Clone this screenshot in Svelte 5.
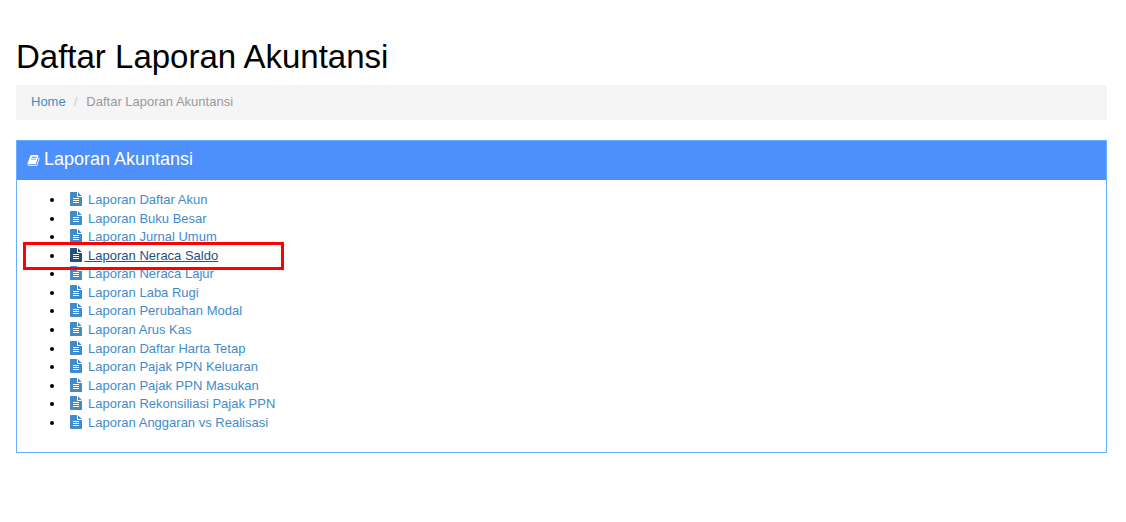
<script>
  const reports = [
    'Laporan Daftar Akun', 'Laporan Buku Besar', 'Laporan Jurnal Umum', 'Laporan Neraca Saldo',
    'Laporan Neraca Lajur', 'Laporan Laba Rugi', 'Laporan Perubahan Modal', 'Laporan Arus Kas',
    'Laporan Daftar Harta Tetap', 'Laporan Pajak PPN Keluaran', 'Laporan Pajak PPN Masukan',
    'Laporan Rekonsiliasi Pajak PPN', 'Laporan Anggaran vs Realisasi'
  ];
  const active = 'Laporan Neraca Saldo';
</script>

<div class="page">
  <h1>Daftar Laporan Akuntansi</h1>
  <ol class="breadcrumb">
    <li><a href="#home">Home</a></li>
    <li class="sep">/</li>
    <li class="current">Daftar Laporan Akuntansi</li>
  </ol>
  <section class="panel">
    <header>
      <svg class="book" viewBox="0 0 1792 1792" fill="currentColor"><path d="M1703 478q40 57 18 129l-275 906q-19 64-76.500 107.500t-122.500 43.500h-923q-77 0-148.500-53.500t-99.500-131.500q-24-67-2-127 0-4 3-27t4-37q1-8-3-21.500t-3-19.500q2-11 8-21t16.500-23.500 16.500-23.500q23-38 45-91.500t30-91.500q3-10 .5-30t-.5-28q3-11 17-28t17-23q21-36 42-92t25-90q1-9-2.500-32t.5-28q4-13 22-30.500t22-22.500q19-26 42.500-84.500t27.500-96.500q1-8-3-25.500t-2-26.500q2-8 9-18t18-23 17-21q8-12 16.500-30.500t15-35 16-36 19.500-32 26.500-23.500 36-11.500 47.500 5.500l-1 3q38-9 51-9h761q74 0 114 56t18 130l-274 906q-36 119-71.500 153.500t-128.500 34.500h-869q-27 0-38 15-11 16-1 43 24 70 144 70h923q29 0 56-15.500t35-41.500l300-987q7-22 5-57 38 15 59 43zm-1064 2q-4 13 2 22.500t20 9.500h608q13 0 25.500-9.500t16.500-22.500l21-64q4-13-2-22.500t-20-9.500h-608q-13 0-25.500 9.500t-16.500 22.500zm-83 256q-4 13 2 22.500t20 9.500h608q13 0 25.500-9.500t16.500-22.500l21-64q4-13-2-22.500t-20-9.500h-608q-13 0-25.500 9.500t-16.500 22.500z"/></svg>
      <span>Laporan Akuntansi</span>
    </header>
    <ul>
      {#each reports as r}
        <li>
          <a href="#r" class:active={r === active}>
            <svg class="file" viewBox="128 0 1536 1792" fill="currentColor"><path d="M1596 476q14 14 28 36h-472v-472q22 14 36 28zm-476 164h544v1056q0 40-28 68t-68 28h-1344q-40 0-68-28t-28-68v-1600q0-40 28-68t68-28h800v544q0 40 28 68t68 28zm160 736v-64q0-14-9-23t-23-9h-704q-14 0-23 9t-9 23v64q0 14 9 23t23 9h704q14 0 23-9t9-23zm0-256v-64q0-14-9-23t-23-9h-704q-14 0-23 9t-9 23v64q0 14 9 23t23 9h704q14 0 23-9t9-23zm0-256v-64q0-14-9-23t-23-9h-704q-14 0-23 9t-9 23v64q0 14 9 23t23 9h704q14 0 23-9t9-23z"/></svg>&nbsp;{r}
          </a>
        </li>
      {/each}
    </ul>
  </section>
  <div class="highlight"></div>
</div>

<style>
  :global(body) {
    margin: 0;
    background: #fff;
    font-family: "Liberation Sans", Arial, sans-serif;
  }
  .page {
    position: relative;
    height: 522px;
    box-sizing: border-box;
    padding: 19px 19px 0 16px;
    overflow: hidden;
  }
  h1 {
    margin: 20px 0 10px;
    font-size: 33px;
    font-weight: 400;
    line-height: 36px;
    color: #000;
  }
  .breadcrumb {
    display: flex;
    margin: 0 0 20px;
    padding: 7px 15px 9px;
    height: 35px;
    box-sizing: border-box;
    list-style: none;
    background: #f5f5f5;
    font-size: 13px;
    line-height: 19px;
  }
  .breadcrumb a { color: #428bca; text-decoration: none; }
  .sep { color: #ccc; padding: 0 9px 0 8px; }
  .current { color: #999; }
  .panel {
    border: 1px solid #66afff;
    height: 313px;
    box-sizing: border-box;
  }
  header {
    display: flex;
    align-items: center;
    gap: 4px;
    height: 39px;
    padding: 0 10px 2px;
    box-sizing: border-box;
    background: #4d8ffb;
    color: #fff;
    font-size: 18px;
  }
  .book { width: 13px; height: 13px; margin-top: 2px; }
  ul {
    margin: 10px 0 0;
    padding: 0 0 0 48px;
    font-size: 13px;
    line-height: 18.57px;
  }
  li { height: 18.57px; }
  li::marker { font-size: 14.5px; }
  li a { color: #428bca; text-decoration: none; }
  li a.active { color: #23527c; text-decoration: underline; }
  .file { width: 12px; height: 14px; vertical-align: -2px; margin: 0 2.5px 0 5px; }
  .highlight {
    position: absolute;
    left: 23px;
    top: 242px;
    width: 261px;
    height: 28px;
    box-sizing: border-box;
    border: 3px solid #f00;
  }
</style>
